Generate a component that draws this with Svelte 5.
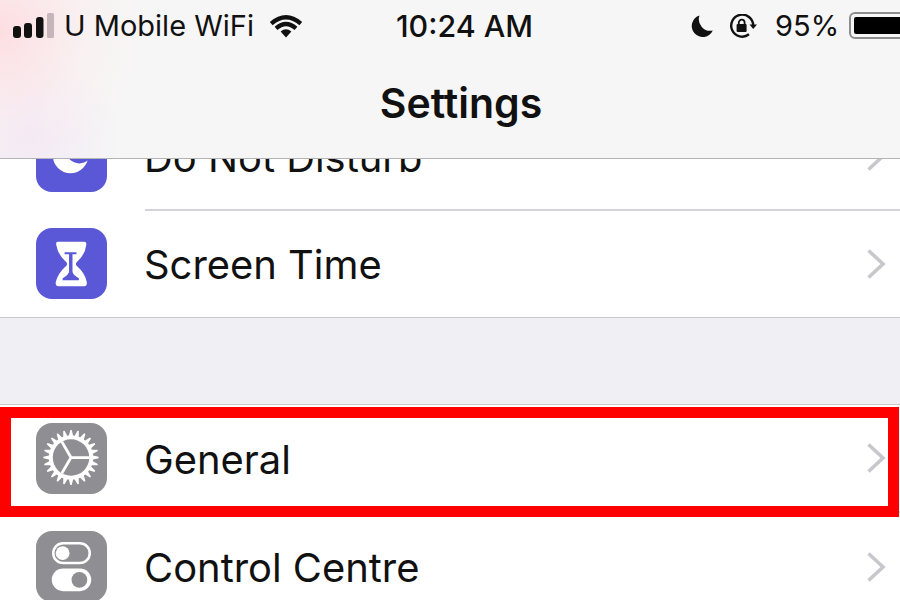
<script lang="ts">
  // gear outline: one flat-topped tooth per step, computed so the spacing stays even
  const teeth = 24;
  const step = (Math.PI * 2) / teeth;
  const gearPoints = Array.from({ length: teeth }, (_, i) => {
    const a = i * step;
    return [
      [a - step * 0.1, 28],
      [a + step * 0.1, 28],
      [a + step * 0.36, 22.5],
      [a + step * 0.64, 22.5],
    ]
      .map(([t, r]) => `${(35.5 + r * Math.cos(t)).toFixed(2)},${(35 + r * Math.sin(t)).toFixed(2)}`)
      .join(' ');
  }).join(' ');
</script>

{#snippet chevron()}
  <svg class="chevron" viewBox="0 0 20 32" aria-hidden="true">
    <path d="M2.5 2.5 L17 16 L2.5 29.5" />
  </svg>
{/snippet}

<div class="screen">
  <header class="nav">
    <div class="status">
      <div class="carrier">
        <svg class="signal" viewBox="0 0 42 26" aria-hidden="true">
          <rect x="0" y="13" width="8" height="12" rx="3" fill="#111" />
          <rect x="11" y="10" width="8" height="15" rx="3" fill="#111" />
          <rect x="23" y="4" width="7.5" height="21" rx="3" fill="#111" />
          <rect x="34" y="0" width="7" height="25" rx="1.5" fill="#c4b6ba" />
        </svg>
        <span>U Mobile WiFi</span>
        <svg class="wifi" viewBox="0 0 34 24" aria-hidden="true">
          <path d="M17 23.5 L11.6 17.6 Q17 13 22.4 17.6 Z" />
          <path d="M2.2 9.6 Q17 -3 31.8 9.6" />
          <path d="M7 14.4 Q17 5.6 27 14.4" />
        </svg>
      </div>
      <span class="time">10:24 AM</span>
      <div class="indicators">
        <svg class="moon" viewBox="0 0 22 22" aria-hidden="true">
          <path d="M8.5 0.5 A11 11 0 1 0 21.8 15.5 A11.5 11.5 0 0 1 8.5 0.5 Z" />
        </svg>
        <svg class="rotate" viewBox="0 0 28 24" aria-hidden="true">
          <path class="ring" d="M24.2 12 A11 11 0 1 0 20 20.3" />
          <path class="arrow" d="M20.5 10.5 H28 L24.2 15 Z" />
          <rect x="7.6" y="10" width="10" height="8" rx="1" />
          <path class="ring thin" d="M9.8 10.5 V8.6 A2.9 2.9 0 0 1 15.6 8.6 V10.5" />
        </svg>
        <span class="percent">95%</span>
        <div class="battery"><div class="charge"></div></div>
      </div>
    </div>
    <div class="title">Settings</div>
  </header>

  <div class="list">
    <section class="group first">
      <div class="row">
        <div class="icon purple">
          <svg viewBox="0 0 72 72" aria-hidden="true">
            <circle cx="35" cy="35" r="18" fill="#fff" />
            <circle cx="44" cy="29" r="14" fill="#5a58d6" />
          </svg>
        </div>
        <div class="body divided">
          <span class="label">Do Not Disturb</span>
          {@render chevron()}
        </div>
      </div>
      <div class="row">
        <div class="icon purple">
          <svg viewBox="0 0 72 72" aria-hidden="true">
            <path
              fill="#fff"
              d="M22 14 H49 Q51.5 14 51 17 Q50 27 41 35 Q40 36.5 41 38 Q50 46 51.5 55 Q52 59 49 59 H23 Q19.5 59 20 55 Q22 46 31 38 Q32 36.5 31 35 Q22 27 20.5 17 Q20 14 22 14 Z"
            />
            <path
              fill="#5a58d6"
              d="M29 24.5 H41 V26.5 H37 V44 Q37 47 43.5 51 V53 H27 V51 Q33.5 47 33.5 44 V26.5 H29 Z"
            />
          </svg>
        </div>
        <div class="body">
          <span class="label">Screen Time</span>
          {@render chevron()}
        </div>
      </div>
    </section>

    <div class="gap"></div>

    <section class="group">
      <div class="row general">
        <div class="icon gray">
          <svg viewBox="0 0 72 72" aria-hidden="true">
            <polygon points={gearPoints} fill="#fff" />
            <circle cx="35.5" cy="35" r="18.5" fill="#8e8e93" />
            <path
              d="M35.5 35 L54 35 M35.5 35 L26.2 19 M35.5 35 L26.2 51"
              stroke="#fff"
              stroke-width="2.8"
              fill="none"
            />
          </svg>
        </div>
        <div class="body divided">
          <span class="label">General</span>
          {@render chevron()}
        </div>
        <div class="highlight"></div>
      </div>
      <div class="row">
        <div class="icon gray">
          <svg viewBox="0 0 72 72" aria-hidden="true">
            <rect x="17.5" y="12.5" width="37" height="20" rx="10" fill="none" stroke="#fff" stroke-width="2.6" />
            <circle cx="27" cy="22.5" r="7" fill="#fff" />
            <rect x="16" y="38" width="40" height="23" rx="11.5" fill="#fff" />
            <circle cx="44" cy="49.5" r="8" fill="#8e8e93" />
          </svg>
        </div>
        <div class="body">
          <span class="label">Control Centre</span>
          {@render chevron()}
        </div>
      </div>
    </section>
  </div>
</div>

<style>
  :global(body) {
    background: #fff;
    font-family: Inter, 'Liberation Sans', sans-serif;
  }

  .screen {
    width: 900px;
    height: 600px;
    overflow: hidden;
    display: flex;
    flex-direction: column;
    background: #efeff4;
    color: #111;
  }

  .nav {
    position: relative;
    z-index: 2;
    flex-shrink: 0;
    height: 158px;
    background:
      radial-gradient(circle at 0 30px, rgba(255, 216, 220, 0.8), rgba(255, 232, 234, 0.3) 90px, transparent 150px),
      radial-gradient(circle at 30px 140px, rgba(240, 228, 246, 0.7), transparent 90px),
      #f6f6f6;
    border-bottom: 1px solid #b4b4b6;
    display: flex;
    flex-direction: column;
  }

  .status {
    display: grid;
    grid-template-columns: 396px auto minmax(0, 1fr);
    align-items: center;
    height: 51px;
    font-size: 29px;
    white-space: nowrap;
  }

  .carrier {
    display: flex;
    align-items: center;
    padding-left: 13px;
  }

  .signal {
    width: 42px;
    height: 26px;
    margin-right: 9px;
  }

  .wifi {
    width: 34px;
    height: 24px;
    margin-left: 15px;
  }

  .wifi path {
    fill: none;
    stroke: #111;
    stroke-width: 4.2;
  }

  .wifi path:first-child {
    fill: #111;
    stroke: none;
  }

  .time {
    font-size: 30.4px;
    font-weight: 500;
  }

  .indicators {
    display: flex;
    align-items: center;
    padding-left: 158px;
    min-width: 0;
  }

  .indicators svg {
    flex-shrink: 0;
  }

  .moon {
    width: 22px;
    height: 22px;
    margin-right: 16px;
    fill: #111;
  }

  .rotate {
    width: 28px;
    height: 24px;
    margin-right: 18px;
    fill: #111;
  }

  .ring {
    fill: none;
    stroke: #111;
    stroke-width: 2.4;
  }

  .ring.thin {
    stroke-width: 1.8;
  }

  .percent {
    margin-right: 10px;
  }

  .battery {
    flex-shrink: 0;
    box-sizing: border-box;
    width: 60px;
    height: 27px;
    padding: 3px;
    border: 2px solid #8e8e8e;
    border-radius: 6px;
  }

  .charge {
    height: 100%;
    background: #000;
    border-radius: 2px;
  }

  .title {
    flex: 1;
    display: flex;
    align-items: center;
    justify-content: center;
    font-size: 41px;
    font-weight: 600;
    padding-left: 22px;
    padding-bottom: 3px;
  }

  .list {
    flex: 1;
    min-height: 0;
  }

  .group {
    background: #fff;
    border-bottom: 1px solid #c8c7cc;
  }

  .group.first {
    margin-top: -56px;
  }

  .gap {
    height: 86px;
  }

  .gap + .group {
    border-top: 1px solid #c8c7cc;
  }

  .row {
    display: flex;
    align-items: center;
    position: relative;
    height: 107px;
    padding-left: 36px;
  }

  .row.general {
    margin-bottom: 1px;
  }

  .icon {
    flex-shrink: 0;
    width: 71px;
    height: 71px;
    margin-right: 38px;
    border-radius: 16px;
  }

  .icon svg {
    display: block;
    width: 100%;
    height: 100%;
  }

  .purple {
    background: #5a58d6;
  }

  .gray {
    background: #8e8e93;
  }

  .body {
    flex: 1;
    align-self: stretch;
    display: flex;
    align-items: center;
    justify-content: space-between;
    padding-right: 14px;
  }

  .body.divided {
    border-bottom: 2px solid #d4d3d7;
    margin-bottom: -1px;
  }

  .label {
    font-size: 39.9px;
    font-weight: 400;
    color: #111;
    margin-top: 2px;
    margin-left: -1px;
  }

  .chevron {
    width: 20px;
    height: 32px;
  }

  .chevron path {
    fill: none;
    stroke: #c7c7cc;
    stroke-width: 3.6;
  }

  .highlight {
    position: absolute;
    left: 0;
    right: 1px;
    top: 2px;
    height: 110px;
    box-sizing: border-box;
    border: 11px solid #fe0000;
    z-index: 1;
  }
</style>
